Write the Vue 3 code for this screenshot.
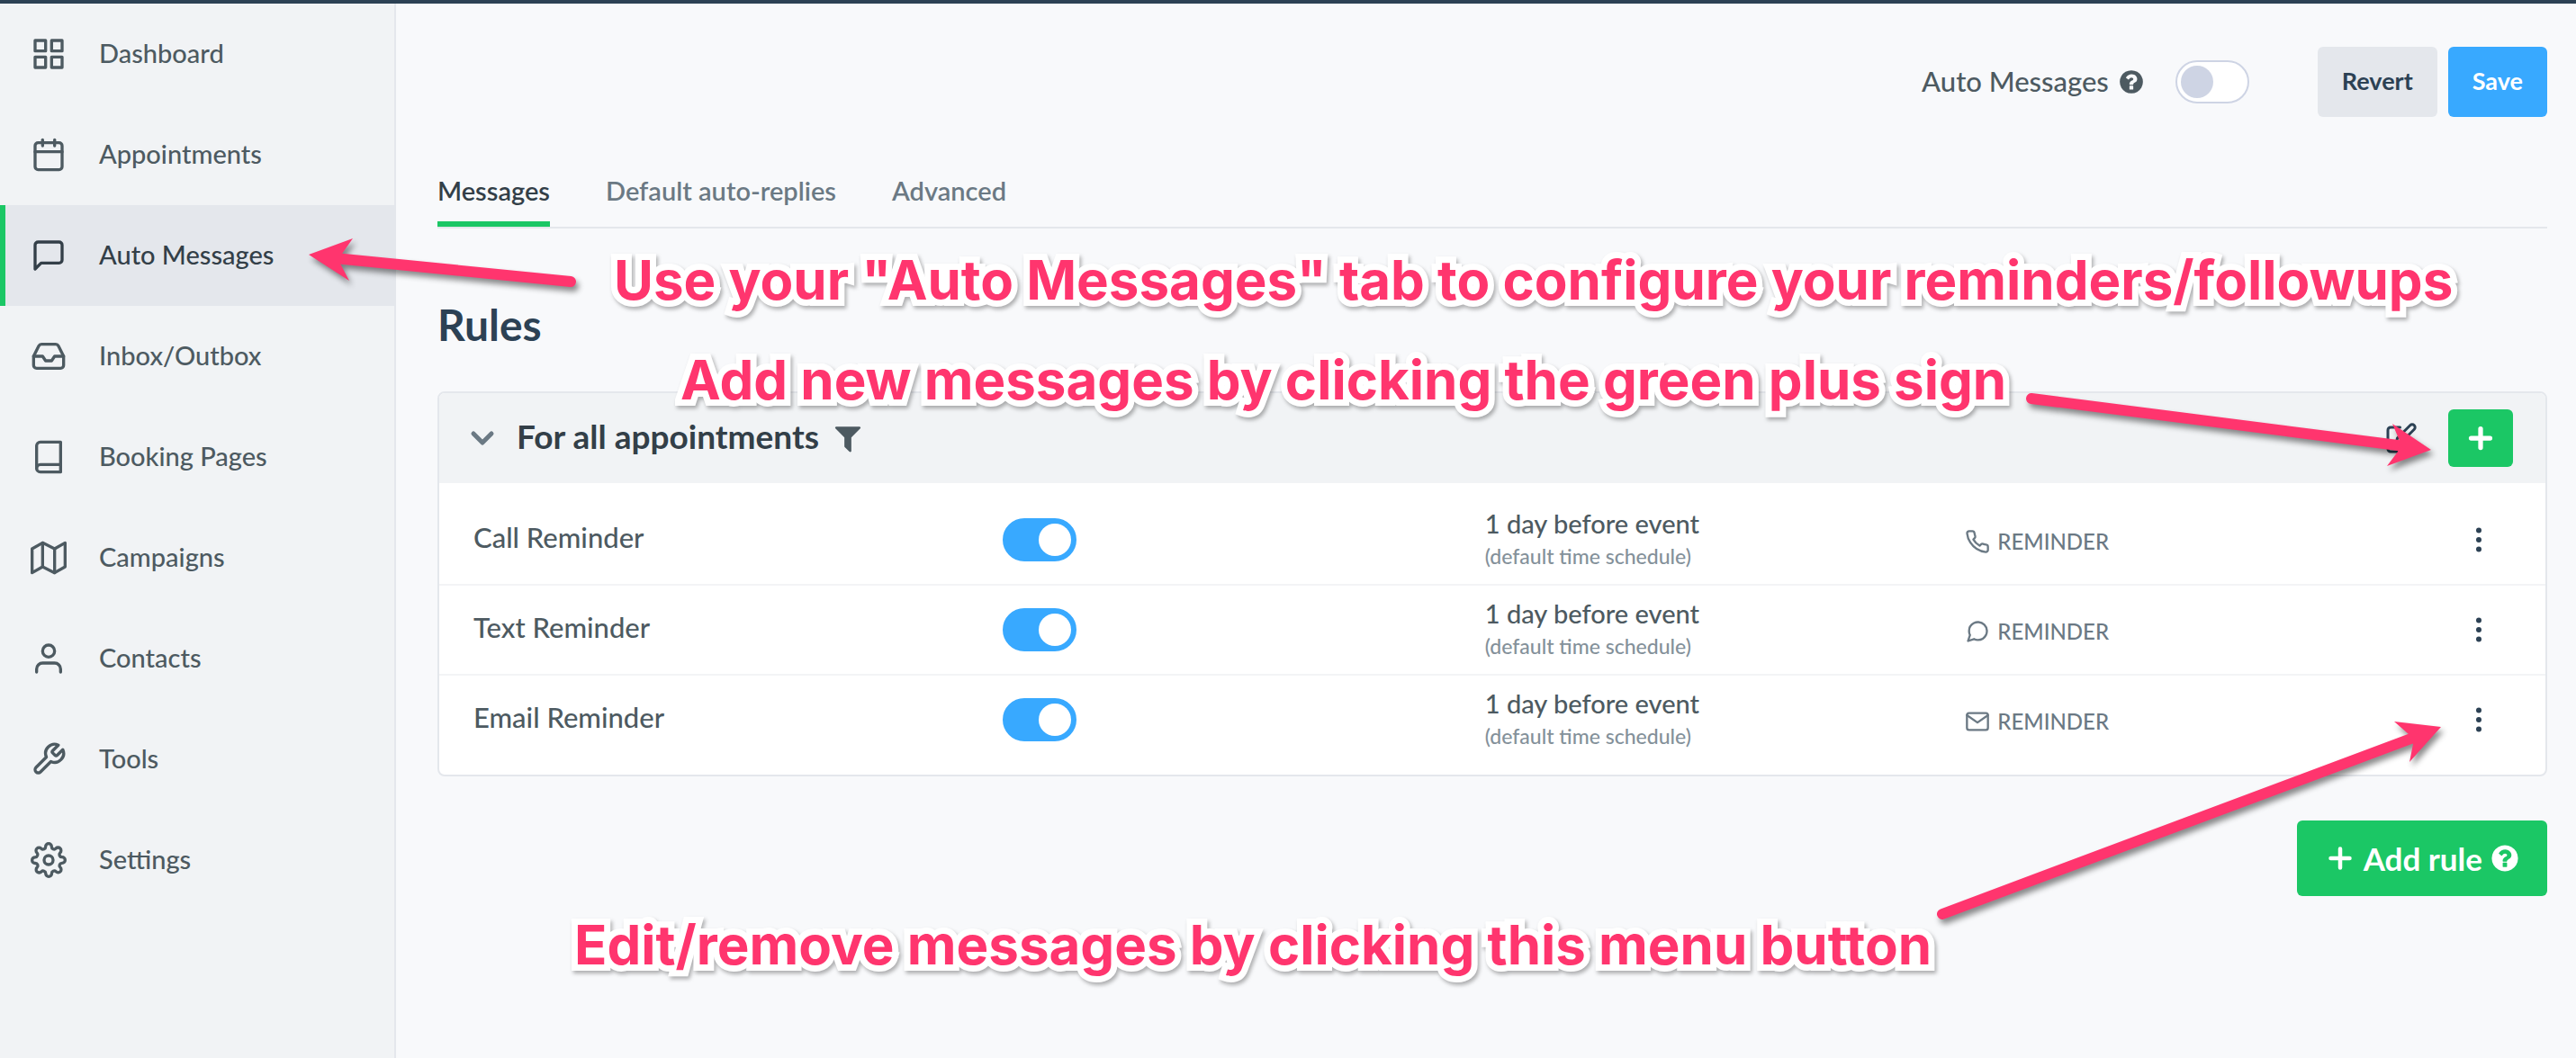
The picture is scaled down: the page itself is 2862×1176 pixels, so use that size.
<script setup>
import { ref } from 'vue'

const icons = {
  grid: ['M3 3h7v7H3z', 'M14 3h7v7h-7z', 'M14 14h7v7h-7z', 'M3 14h7v7H3z'],
  calendar: ['M5 4h14a2 2 0 0 1 2 2v14a2 2 0 0 1-2 2H5a2 2 0 0 1-2-2V6a2 2 0 0 1 2-2z', 'M16 2v4', 'M8 2v4', 'M3 10h18'],
  message: ['M21 15a2 2 0 0 1-2 2H7l-4 4V5a2 2 0 0 1 2-2h14a2 2 0 0 1 2 2z'],
  inbox: ['M22 12h-6l-2 3h-4l-2-3H2', 'M5.45 5.11L2 12v6a2 2 0 0 0 2 2h16a2 2 0 0 0 2-2v-6l-3.45-6.89A2 2 0 0 0 16.76 4H7.24a2 2 0 0 0-1.79 1.11z'],
  book: ['M4 19.5A2.5 2.5 0 0 1 6.5 17H20', 'M6.5 2H20v20H6.5A2.5 2.5 0 0 1 4 19.5v-15A2.5 2.5 0 0 1 6.5 2z'],
  map: ['M1 6v16l7-4 8 4 7-4V2l-7 4-8-4-7 4z', 'M8 2v16', 'M16 6v16'],
  user: ['M20 21v-2a4 4 0 0 0-4-4H8a4 4 0 0 0-4 4v2', 'M8 7a4 4 0 1 0 8 0a4 4 0 1 0-8 0z'],
  tool: ['M14.7 6.3a1 1 0 0 0 0 1.4l1.6 1.6a1 1 0 0 0 1.4 0l3.77-3.77a6 6 0 0 1-7.94 7.94l-6.91 6.91a2.12 2.12 0 0 1-3-3l6.91-6.91a6 6 0 0 1 7.94-7.94l-3.76 3.76z'],
  settings: ['M9 12a3 3 0 1 0 6 0a3 3 0 1 0-6 0z', 'M19.4 15a1.65 1.65 0 0 0 .33 1.82l.06.06a2 2 0 0 1 0 2.83 2 2 0 0 1-2.83 0l-.06-.06a1.65 1.65 0 0 0-1.82-.33 1.65 1.65 0 0 0-1 1.51V21a2 2 0 0 1-2 2 2 2 0 0 1-2-2v-.09A1.65 1.65 0 0 0 9 19.4a1.65 1.65 0 0 0-1.82.33l-.06.06a2 2 0 0 1-2.83 0 2 2 0 0 1 0-2.83l.06-.06a1.65 1.65 0 0 0 .33-1.82 1.65 1.65 0 0 0-1.51-1H3a2 2 0 0 1-2-2 2 2 0 0 1 2-2h.09A1.65 1.65 0 0 0 4.6 9a1.65 1.65 0 0 0-.33-1.82l-.06-.06a2 2 0 0 1 0-2.83 2 2 0 0 1 2.83 0l.06.06a1.65 1.65 0 0 0 1.82.33H9a1.65 1.65 0 0 0 1-1.51V3a2 2 0 0 1 2-2 2 2 0 0 1 2 2v.09a1.65 1.65 0 0 0 1 1.51 1.65 1.65 0 0 0 1.82-.33l.06-.06a2 2 0 0 1 2.83 0 2 2 0 0 1 0 2.83l-.06.06a1.65 1.65 0 0 0-.33 1.82V9a1.65 1.65 0 0 0 1.51 1H21a2 2 0 0 1 2 2 2 2 0 0 1-2 2h-.09a1.65 1.65 0 0 0-1.51 1z'],
  phone: ['M22 16.92v3a2 2 0 0 1-2.18 2 19.79 19.79 0 0 1-8.63-3.07 19.5 19.5 0 0 1-6-6 19.79 19.79 0 0 1-3.07-8.67A2 2 0 0 1 4.11 2h3a2 2 0 0 1 2 1.72 12.84 12.84 0 0 0 .7 2.81 2 2 0 0 1-.45 2.11L8.09 9.91a16 16 0 0 0 6 6l1.27-1.27a2 2 0 0 1 2.11-.45 12.84 12.84 0 0 0 2.81.7A2 2 0 0 1 22 16.92z'],
  chat: ['M21 11.5a8.38 8.38 0 0 1-.9 3.8 8.5 8.5 0 0 1-7.6 4.7 8.38 8.38 0 0 1-3.8-.9L3 21l1.9-5.7a8.38 8.38 0 0 1-.9-3.8 8.5 8.5 0 0 1 4.7-7.6 8.38 8.38 0 0 1 3.8-.9h.5a8.48 8.48 0 0 1 8 8v.5z'],
  mail: ['M4 4h16a2 2 0 0 1 2 2v12a2 2 0 0 1-2 2H4a2 2 0 0 1-2-2V6a2 2 0 0 1 2-2z', 'M22 6l-10 7L2 6'],
}

const helpPath = 'M1024 1376v-192q0-14-9-23t-23-9h-192q-14 0-23 9t-9 23v192q0 14 9 23t23 9h192q14 0 23-9t9-23zm256-672q0-88-55.5-163t-138.5-116-170-41q-243 0-371 213-15 24 8 42l132 100q7 6 19 6 16 0 25-12 53-68 86-92 34-24 86-24 48 0 85.5 26t37.5 59q0 38-20 61t-68 45q-63 28-115.5 86.5t-52.5 125.5v36q0 14 9 23t23 9h192q14 0 23-9t9-23q0-19 21.5-49.5t54.5-49.5q32-18 49-28.5t46-35 44.5-48 28-60.5 12.5-81zm384 192q0 209-103 385.5t-279.5 279.5-385.5 103-385.5-103-279.5-279.5-103-385.5 103-385.5 279.5-279.5 385.5-103 385.5 103 279.5 279.5 103 385.5z'

const nav = [
  { label: 'Dashboard', icon: 'grid' },
  { label: 'Appointments', icon: 'calendar' },
  { label: 'Auto Messages', icon: 'message' },
  { label: 'Inbox/Outbox', icon: 'inbox' },
  { label: 'Booking Pages', icon: 'book' },
  { label: 'Campaigns', icon: 'map' },
  { label: 'Contacts', icon: 'user' },
  { label: 'Tools', icon: 'tool' },
  { label: 'Settings', icon: 'settings' },
]
const currentPage = 'Auto Messages'

const tabs = ['Messages', 'Default auto-replies', 'Advanced']
const currentTab = ref('Messages')

const autoMessages = ref(false)
const rules = ref([
  { name: 'Call Reminder', icon: 'phone', on: true },
  { name: 'Text Reminder', icon: 'chat', on: true },
  { name: 'Email Reminder', icon: 'mail', on: true },
])
</script>

<template>
  <div class="app">
    <nav class="sidebar" aria-label="Main">
      <a
        v-for="item in nav"
        :key="item.label"
        href="#"
        class="nav-item"
        :class="{ active: item.label === currentPage }"
      >
        <svg class="icon nav-icon" viewBox="0 0 24 24" aria-hidden="true">
          <path v-for="d in icons[item.icon]" :key="d" :d="d" />
        </svg>
        <span class="nav-text">{{ item.label }}</span>
      </a>
    </nav>

    <main class="main">
      <header class="toolbar">
        <label class="toolbar-label" for="auto-messages">
          <span class="nav-text">Auto Messages</span>
          <svg class="help" viewBox="0 0 1792 1792" aria-hidden="true"><path :d="helpPath" /></svg>
        </label>
        <input id="auto-messages" v-model="autoMessages" type="checkbox" class="switch" />
        <div class="actions">
          <button type="button" class="btn btn-plain">Revert</button>
          <button type="button" class="btn btn-primary">Save</button>
        </div>
      </header>

      <div class="tabs">
        <a
          v-for="tab in tabs"
          :key="tab"
          href="#"
          class="tab"
          :class="{ active: tab === currentTab }"
          @click.prevent="currentTab = tab"
        >{{ tab }}</a>
      </div>

      <h1 class="title">Rules</h1>

      <section class="card">
        <header class="card-head">
          <button type="button" class="icon-btn chevron" aria-label="Collapse">
            <svg class="icon" viewBox="0 0 24 24"><path d="M6 9l6 6 6-6" /></svg>
          </button>
          <h2 class="card-title">For all appointments</h2>
          <svg class="filter" viewBox="0 0 1792 1792" aria-hidden="true">
            <path d="M1595 295q17 41-14 70l-493 493v742q0 42-39 59-13 5-25 5-27 0-45-19l-256-256q-19-19-19-45v-486l-493-493q-31-29-14-70 17-39 59-39h1280q42 0 59 39z" />
          </svg>
          <button type="button" class="icon-btn edit" aria-label="Edit rule">
            <svg class="icon" viewBox="0 0 24 24">
              <path d="M11 4H4a2 2 0 0 0-2 2v14a2 2 0 0 0 2 2h14a2 2 0 0 0 2-2v-7" />
              <path d="M18.5 2.5a2.12 2.12 0 0 1 3 3L12 15l-4 1 1-4 9.500-9.500z" />
            </svg>
          </button>
          <button type="button" class="add-btn" aria-label="Add message">
            <svg class="icon" viewBox="0 0 24 24"><path d="M12 5v14M5 12h14" /></svg>
          </button>
        </header>

        <div class="card-body">
          <table class="rules">
            <colgroup>
              <col class="col-name" />
              <col class="col-switch" />
              <col class="col-time" />
              <col />
              <col class="col-menu" />
            </colgroup>
            <tbody>
              <tr v-for="rule in rules" :key="rule.name">
                <td class="name">{{ rule.name }}</td>
                <td><input v-model="rule.on" type="checkbox" class="switch" :aria-label="rule.name" /></td>
                <td>
                  <div class="when">1 day before event</div>
                  <div class="note">(default time schedule)</div>
                </td>
                <td>
                  <div class="kind">
                    <svg class="icon" viewBox="0 0 24 24" aria-hidden="true">
                      <path v-for="d in icons[rule.icon]" :key="d" :d="d" />
                    </svg>
                    <span>REMINDER</span>
                  </div>
                </td>
                <td>
                  <button type="button" class="icon-btn" :aria-label="'Menu for ' + rule.name">
                    <svg class="dots" viewBox="0 0 24 24">
                      <circle cx="12" cy="5" r="2" />
                      <circle cx="12" cy="12" r="2" />
                      <circle cx="12" cy="19" r="2" />
                    </svg>
                  </button>
                </td>
              </tr>
            </tbody>
          </table>
        </div>
      </section>

      <button type="button" class="add-rule">
        <svg class="icon plus" viewBox="0 0 24 24" aria-hidden="true"><path d="M12 5v14M5 12h14" /></svg>
        <span>Add rule</span>
        <svg class="help" viewBox="0 0 1792 1792" aria-hidden="true"><path :d="helpPath" /></svg>
      </button>
    </main>

    <svg class="arrows" viewBox="0 0 2862 1176" aria-hidden="true">
      <g>
        <path class="shaft" d="M634 313L372 287" />
        <path d="M343 283L392 265L380 282L378 293L388 312z" />
      </g>
      <g>
        <path class="shaft" d="M2257 443L2672 496" />
        <path d="M2701 500L2658 471L2666 490L2664 502L2652 518z" />
      </g>
      <g>
        <path class="shaft" d="M2158 1016L2684 819" />
        <path d="M2712 808L2660 802L2676 816L2681 827L2677 847z" />
      </g>
    </svg>
    <p class="note-label note-tab">Use your "Auto Messages" tab to configure your reminders/followups</p>
    <p class="note-label note-add">Add new messages by clicking the green plus sign</p>
    <p class="note-label note-menu">Edit/remove messages by clicking this menu button</p>
  </div>
</template>

<style>
body {
  margin: 0;
  background: #f8f9fb;
}
</style>

<style scoped>
.app {
  position: relative;
  display: flex;
  min-height: 100vh;
  box-sizing: border-box;
  overflow: hidden;
  border-top: 4px solid #2c4154;
  background: #f8f9fb;
  color: #4d5a61;
  font: 500 29px/40px Lato, "Open Sans", sans-serif;
}
button {
  border: 0;
  padding: 0;
  font: inherit;
  cursor: pointer;
}
.icon {
  display: block;
  fill: none;
  stroke: currentColor;
  stroke-width: 2;
  stroke-linecap: round;
  stroke-linejoin: round;
}
.sidebar {
  flex: none;
  width: 438px;
  border-right: 2px solid #e4e7ec;
  background: #f1f3f5;
}
.nav-item {
  display: flex;
  align-items: center;
  gap: 36px;
  height: 112px;
  box-sizing: border-box;
  margin-right: -2px;
  padding-left: 28px;
  border-left: 6px solid transparent;
  color: inherit;
  text-decoration: none;
}
.nav-item.active {
  border-left-color: #1bc765;
  background: #e4e7ec;
  color: #333f48;
}
.nav-text {
  padding-bottom: 3px;
}
.nav-icon {
  width: 40px;
  height: 40px;
}
.main {
  flex: 1;
  min-width: 0;
  display: flex;
  flex-direction: column;
  padding: 48px 32px 48px 46px;
}
.toolbar {
  display: flex;
  align-items: center;
  justify-content: flex-end;
}
.toolbar-label {
  display: flex;
  align-items: center;
  gap: 10px;
  margin-right: 34px;
  font-size: 31px;
}
.help {
  display: block;
  width: 30px;
  height: 30px;
  fill: currentColor;
}
.switch {
  appearance: none;
  display: block;
  width: 82px;
  height: 48px;
  box-sizing: border-box;
  margin: 0;
  padding: 4px;
  border: 2px solid #ced4e4;
  border-radius: 24px;
  background: #fff;
}
.switch::before {
  content: "";
  display: block;
  width: 36px;
  height: 36px;
  border-radius: 50%;
  background: #ced4e4;
}
.switch:checked {
  border-color: #38a9ff;
  background: #38a9ff;
}
.switch:checked::before {
  margin-left: auto;
  background: #fff;
}
.actions {
  display: flex;
  gap: 12px;
  margin-left: 76px;
}
.btn {
  height: 78px;
  padding: 0 27px 2px;
  border-radius: 6px;
  font-size: 27px;
  font-weight: 700;
}
.btn-plain {
  background: #e4e7ec;
  color: #2c4154;
}
.btn-primary {
  background: #38a9ff;
  color: #fff;
}
.tabs {
  display: flex;
  gap: 62px;
  margin-top: 60px;
  border-bottom: 2px solid #e4e7ec;
}
.tab {
  padding: 2px 0 14px;
  border-bottom: 6px solid transparent;
  color: #6b7984;
  font-weight: 600;
  text-decoration: none;
}
.tab.active {
  border-bottom-color: #1bc765;
  color: #333f48;
}
.title {
  margin: 78px 0 45px;
  color: #2c4154;
  font-size: 48px;
  line-height: 58px;
}
.card {
  border: 2px solid #e4e7ec;
  border-radius: 8px;
  background: #fff;
  overflow: hidden;
}
.card-head {
  display: flex;
  align-items: center;
  height: 100px;
  padding: 0 36px 0 28px;
  background: #f1f3f5;
}
.card-title {
  margin: 0 14px 0 18px;
  padding-bottom: 4px;
  color: #333f48;
  font-size: 37px;
}
.icon-btn {
  display: block;
  background: none;
  color: #2c4154;
}
.icon-btn svg {
  width: 36px;
  height: 36px;
}
.icon-btn.chevron {
  color: #6b7984;
}
.chevron svg {
  width: 40px;
  height: 40px;
  stroke-width: 3;
}
.filter {
  width: 36px;
  height: 36px;
  fill: #4d5a61;
}
.edit {
  margin-left: auto;
}
.add-btn {
  display: grid;
  place-items: center;
  width: 72px;
  height: 64px;
  margin-left: 34px;
  border-radius: 6px;
  background: #1bc765;
  color: #fff;
}
.add-btn svg {
  width: 36px;
  height: 36px;
  stroke-width: 3.5;
}
.card-body {
  padding: 14px 0 12px;
}
.rules {
  width: 100%;
  table-layout: fixed;
  border-collapse: collapse;
}
.col-name {
  width: 26.75%;
}
.col-switch {
  width: 22.9%;
}
.col-time {
  width: 22.8%;
}
.col-menu {
  width: 92px;
}
.rules td {
  height: 98px;
  padding: 0;
  vertical-align: middle;
}
.rules tr + tr td {
  border-top: 2px solid #f3f4f6;
}
.rules .name {
  height: 92px;
  padding: 0 0 6px 38px;
  font-size: 31px;
}
.when {
  line-height: 36px;
}
.note {
  color: #84919a;
  font-size: 23px;
  line-height: 36px;
}
.kind {
  display: flex;
  align-items: center;
  gap: 8px;
  padding-top: 3px;
  color: #6b7984;
  font-size: 24px;
}
.kind svg {
  width: 28px;
  height: 28px;
}
.dots {
  display: block;
  fill: currentColor;
}
.add-rule {
  display: flex;
  align-items: center;
  align-self: flex-end;
  gap: 8px;
  height: 84px;
  margin-top: 49px;
  padding: 0 30px;
  border-radius: 6px;
  background: #1bc765;
  color: #fff;
  font-size: 35px;
  font-weight: 700;
}
.plus {
  width: 36px;
  height: 36px;
  stroke-width: 3;
}
.add-rule .help {
  width: 34px;
  height: 34px;
}
.arrows {
  position: absolute;
  top: -4px;
  left: 0;
  width: 2862px;
  height: 1176px;
  pointer-events: none;
  fill: #ff356e;
}
.arrows g {
  filter: drop-shadow(3px 5px 3px rgba(0, 0, 0, 0.45));
}
.shaft {
  fill: none;
  stroke: #ff356e;
  stroke-width: 12;
  stroke-linecap: round;
}
.note-label {
  position: absolute;
  margin: 0;
  color: #ff356e;
  font: 700 60px/72px Inter, sans-serif;
  white-space: nowrap;
  -webkit-text-stroke: 14px #fff;
  paint-order: stroke fill;
  stroke-linejoin: round;
  filter: drop-shadow(2px 3px 2px rgba(0, 0, 0, 0.3));
}
.note-tab {
  top: 271px;
  left: 682px;
}
.note-add {
  top: 382px;
  left: 756px;
}
.note-menu {
  top: 1010px;
  left: 638px;
}
</style>
